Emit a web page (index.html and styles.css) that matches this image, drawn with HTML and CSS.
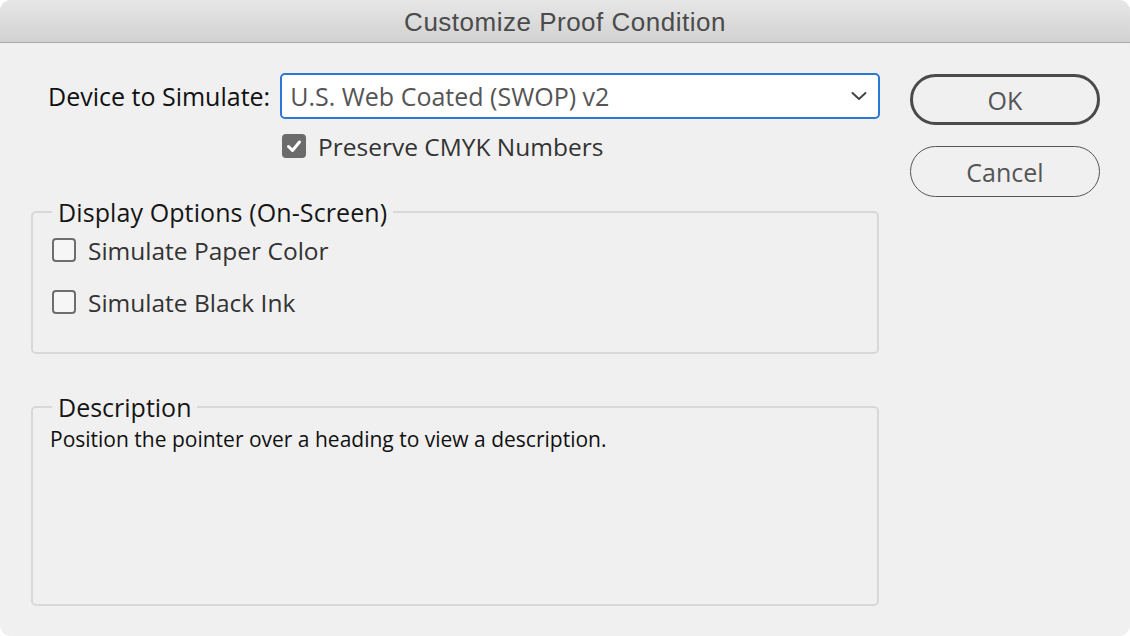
FILE: index.html
```html
<!DOCTYPE html>
<html>
<head>
<meta charset="utf-8">
<link rel="stylesheet" href="styles.css">
</head>
<body>
<div class="window">
  <div class="titlebar">Customize Proof Condition</div>
  <div class="content">
    <div class="main">
      <div class="device-row">
        <span class="label">Device to Simulate:</span>
        <div class="select">
          <span class="select-value">U.S. Web Coated (SWOP) v2</span>
          <svg class="chevron" width="16" height="10" viewBox="0 0 16 10"><path d="M1.5 2 L8 8 L14.5 2" fill="none" stroke="#444" stroke-width="2" stroke-linecap="round" stroke-linejoin="round"/></svg>
        </div>
      </div>
      <div class="check-row preserve">
        <span class="box checked"><svg width="24" height="24" viewBox="0 0 24 24"><path d="M6.5 12.5 L10.5 16.5 L17.5 8" fill="none" stroke="#fff" stroke-width="3" stroke-linecap="round" stroke-linejoin="round"/></svg></span>
        <span class="check-label">Preserve CMYK Numbers</span>
      </div>
      <fieldset class="group display">
        <legend>Display Options (On-Screen)</legend>
        <div class="check-row">
          <span class="box"></span>
          <span class="check-label">Simulate Paper Color</span>
        </div>
        <div class="check-row">
          <span class="box"></span>
          <span class="check-label">Simulate Black Ink</span>
        </div>
      </fieldset>
      <fieldset class="group description">
        <legend>Description</legend>
        <p class="desc-text">Position the pointer over a heading to view a description.</p>
      </fieldset>
    </div>
    <div class="buttons">
      <div class="btn default">OK</div>
      <div class="btn">Cancel</div>
    </div>
  </div>
</div>
</body>
</html>
```
FILE: styles.css
```css
html, body {
  margin: 0;
  padding: 0;
  background: #ffffff;
}
body {
  font-family: "Open Sans", "DejaVu Sans", sans-serif;
}
.window {
  width: 1130px;
  height: 636px;
  background: #f0f0f0;
  border-radius: 11px;
  overflow: hidden;
  display: flex;
  flex-direction: column;
}
.titlebar {
  height: 43px;
  flex: none;
  background: linear-gradient(#e7e7e7, #d2d2d2);
  border-bottom: 1px solid #a8a8a8;
  font-family: "Liberation Sans", Arial, sans-serif;
  font-size: 26px;
  letter-spacing: 0.5px;
  color: #4b4b4b;
  display: flex;
  align-items: center;
  justify-content: center;
  padding-top: 2px;
  box-sizing: border-box;
}
.content {
  display: flex;
  padding: 30px 30px 0 31px;
  gap: 31px;
}
.main {
  width: 848px;
  flex: none;
  display: flex;
  flex-direction: column;
}
.device-row {
  display: flex;
  align-items: center;
  padding-left: 17px;
  gap: 10px;
}
.label {
  font-size: 25px;
  color: #111;
  white-space: nowrap;
  flex: none;
}
.select {
  width: 600px;
  flex: none;
  height: 46px;
  box-sizing: border-box;
  border: 2px solid #2b77d3;
  border-radius: 5px;
  background: #fff;
  display: flex;
  align-items: center;
  justify-content: space-between;
  padding: 0 11px 0 8px;
}
.select-value {
  font-size: 25px;
  color: #555;
  white-space: nowrap;
}
.check-row {
  display: flex;
  align-items: center;
  gap: 12px;
  height: 30px;
}
.preserve {
  margin-top: 12px;
  margin-left: 251px;
}
.box {
  width: 24px;
  height: 24px;
  box-sizing: border-box;
  border: 2px solid #6e6e6e;
  border-radius: 4px;
  background: #f6f6f6;
  flex: none;
  display: flex;
}
.box.checked {
  border: none;
  background: #6b6b6b;
}
.check-label {
  font-size: 24.5px;
  color: #333;
  white-space: nowrap;
}
.group {
  margin: 0;
  padding: 0;
  border: 2px solid #d8d8d8;
  border-radius: 5px;
}
.group legend {
  padding: 0 6px;
  font-size: 25px;
  line-height: 30px;
  color: #161616;
  white-space: nowrap;
}
.display {
  margin-top: 36px;
  padding: 8px 19px 35px;
  display: flex;
  flex-direction: column;
  gap: 22px;
}
.display legend {
  margin-left: 0;
  letter-spacing: 0.1px;
}
.description {
  margin-top: 38px;
  height: 214px;
  box-sizing: border-box;
  padding: 4px 17px 0;
}
.description legend {
  margin-left: 2px;
}
.desc-text {
  margin: 0;
  font-size: 21px;
  line-height: 26px;
  color: #111;
}
.buttons {
  display: flex;
  flex-direction: column;
  gap: 21px;
  padding-top: 1px;
}
.btn {
  width: 190px;
  height: 51px;
  box-sizing: border-box;
  border: 1.5px solid #555;
  border-radius: 26px;
  display: flex;
  align-items: center;
  justify-content: center;
  font-size: 25px;
  color: #555;
}
.btn.default {
  border: 3px solid #4a4a4a;
}
```
